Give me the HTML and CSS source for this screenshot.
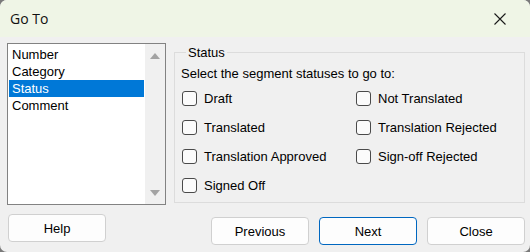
FILE: index.html
```html
<!DOCTYPE html>
<html>
<head>
<meta charset="utf-8">
<link rel="stylesheet" href="styles.css">
</head>
<body>
<div class="window">
  <div class="titlebar">
    <span class="title">Go To</span>
    <svg class="close" width="12" height="12" viewBox="0 0 12 12"><path d="M0.5 0.5 L11.5 11.5 M11.5 0.5 L0.5 11.5" stroke="#1a1a1a" stroke-width="1.1" fill="none"/></svg>
  </div>
  <div class="content">
    <div class="listbox">
      <div class="items">
        <div class="item">Number</div>
        <div class="item">Category</div>
        <div class="item selected">Status</div>
        <div class="item">Comment</div>
      </div>
      <div class="scrollbar">
        <svg width="20" height="20" viewBox="0 0 20 20"><polygon points="5,15 10,9 15,15" fill="#a3a3a3"/></svg>
        <svg width="20" height="20" viewBox="0 0 20 20"><polygon points="5,6 15,6 10,12" fill="#a3a3a3"/></svg>
      </div>
    </div>
    <fieldset class="group">
      <legend>Status</legend>
      <div class="prompt">Select the segment statuses to go to:</div>
      <div class="checks">
        <label class="check"><span class="box"></span>Draft</label>
        <label class="check"><span class="box"></span>Not Translated</label>
        <label class="check"><span class="box"></span>Translated</label>
        <label class="check"><span class="box"></span>Translation Rejected</label>
        <label class="check"><span class="box"></span>Translation Approved</label>
        <label class="check"><span class="box"></span>Sign-off Rejected</label>
        <label class="check"><span class="box"></span>Signed Off</label>
      </div>
    </fieldset>
  </div>
  <div class="buttons">
    <button class="btn help">Help</button>
    <div class="right">
      <button class="btn">Previous</button>
      <button class="btn primary">Next</button>
      <button class="btn">Close</button>
    </div>
  </div>
</div>
</body>
</html>
```
FILE: styles.css
```css
html, body {
  margin: 0;
  padding: 0;
  background: #7a7a7a;
}
body {
  width: 530px;
  height: 252px;
  overflow: hidden;
  font-family: "Liberation Sans", Arial, sans-serif;
  font-size: 13px;
  color: #000;
}
.window {
  width: 530px;
  height: 252px;
  background: #f0f0f0;
  border-radius: 7px;
  overflow: hidden;
}
.titlebar {
  height: 37px;
  background: #eff5e6;
  display: flex;
  align-items: center;
  justify-content: space-between;
  padding: 0 24px 0 10px;
}
.title {
  font-family: "Open Sans", "Noto Sans", sans-serif;
  font-size: 14px;
  color: #111;
  margin-top: -1px;
}
.close {
  display: block;
  margin-top: 0px;
}
.content {
  display: flex;
  align-items: flex-start;
  padding: 6px 0 0 7px;
}
.listbox {
  width: 159px;
  height: 162px;
  box-sizing: border-box;
  border: 1px solid #828282;
  background: #fff;
  display: flex;
}
.items {
  flex: 1;
  padding: 2px 1px 0 1px;
}
.item {
  height: 17px;
  line-height: 17px;
  padding-left: 3px;
}
.item.selected {
  background: #0078d7;
  color: #fff;
}
.scrollbar {
  width: 20px;
  background: #f0f0f0;
  display: flex;
  flex-direction: column;
  justify-content: space-between;
  margin: 0 0 0 0;
  padding: 0;
}
.scrollbar svg { display: block; }
.group {
  margin: 2px 0 0 8px;
  width: 351px;
  height: 158px;
  box-sizing: border-box;
  border: 1px solid #dcdcdc;
  padding: 6px 4px 0 6px;
  min-width: 0;
}
.group legend {
  font-size: 13px;
  line-height: 15px;
  padding: 0 2px;
  margin-left: 5px;
}
.prompt {
  line-height: 15px;
}
.checks {
  display: grid;
  grid-template-columns: 174px 1fr;
  grid-auto-rows: 29px;
  margin-top: 3px;
}
.check {
  display: flex;
  align-items: center;
  padding-left: 1px;
}
.box {
  width: 15px;
  height: 15px;
  box-sizing: border-box;
  border: 1px solid #4a4a4a;
  border-radius: 3px;
  background: #fbfbfb;
  margin-right: 7px;
}
.buttons {
  display: flex;
  justify-content: space-between;
  align-items: flex-start;
  padding: 9px 5px 0 8px;
}
.right {
  display: flex;
  gap: 10px;
  margin-top: 3px;
}
.btn {
  width: 98px;
  height: 28px;
  box-sizing: border-box;
  border: 1px solid #d0d0d0;
  border-radius: 4px;
  background: #fdfdfd;
  font-family: "Liberation Sans", Arial, sans-serif;
  font-size: 13px;
  color: #000;
  padding: 0;
}
.btn.primary {
  border-color: #0067c0;
}
```
